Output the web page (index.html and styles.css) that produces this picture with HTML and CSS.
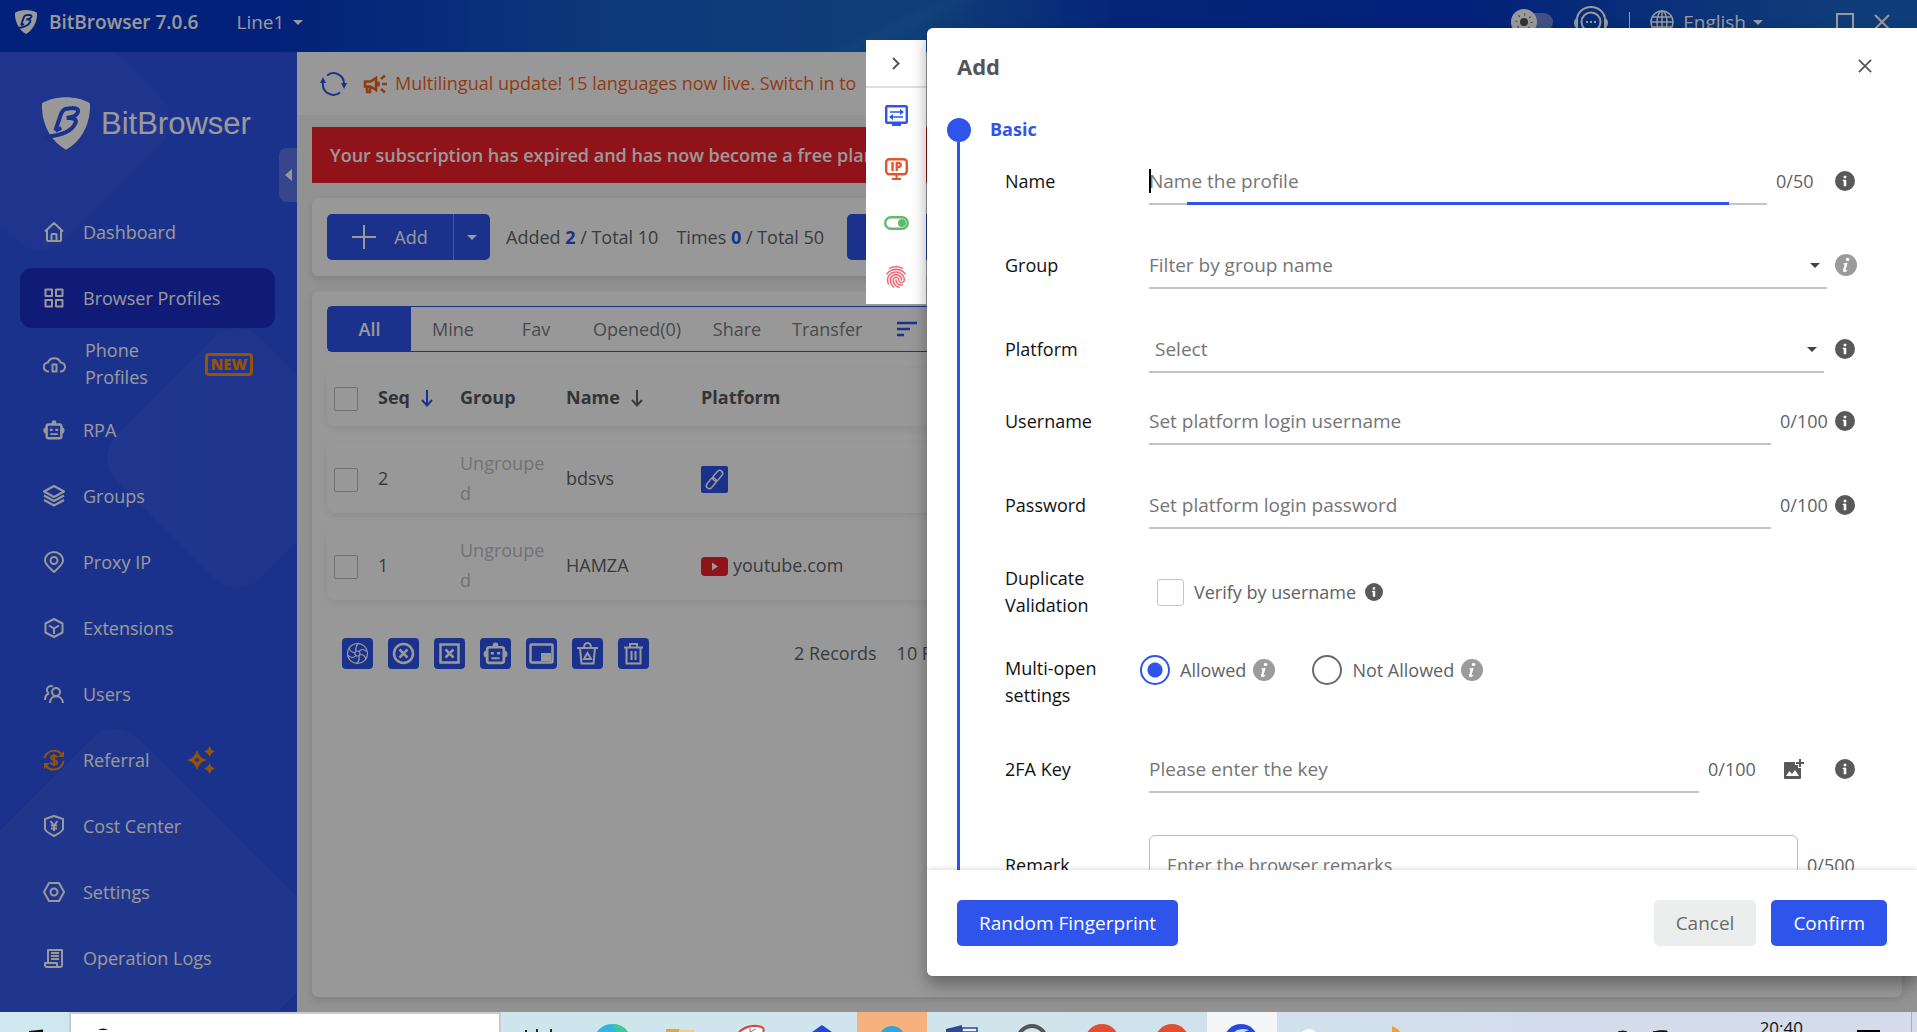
FILE: index.html
```html
<!DOCTYPE html>
<html lang="en">
<head>
<meta charset="utf-8">
<meta name="viewport" content="width=device-width, initial-scale=1">
<title>BitBrowser 7.0.6</title>
<link rel="stylesheet" href="styles.css">
</head>
<body>
<svg class="sprite" aria-hidden="true">
  <symbol id="caret" viewBox="0 0 10 5"><path d="M0 0h10L5 5z" fill="currentColor"/></symbol>
  <symbol id="info" viewBox="0 0 20 20"><circle cx="10" cy="10" r="10" fill="#595959"/><path d="M9 5h2v2H9zM8 9h3v6H9v-5H8z" fill="#fff" stroke="#fff" stroke-width=".6"/></symbol>
  <symbol id="info-soft" viewBox="0 0 22 22"><circle cx="11" cy="11" r="11" fill="#9b9b9b"/><circle cx="12.6" cy="5.4" r="1.7" fill="#fff"/><path d="M8.2 9.6l4.4-.8-2 7.2c-.2.8.6.6 1.6-.3l.4.5c-1.6 1.7-2.6 2-3.6 1.8-.9-.2-1.1-1-.9-1.8l1.5-5.6-1.5-.3z" fill="#fff"/></symbol>
  <symbol id="cross" viewBox="0 0 16 16"><path d="M1 1l14 14M15 1L1 15" stroke="currentColor" stroke-width="2" fill="none"/></symbol>
  <symbol id="robot" viewBox="0 0 24 24"><circle cx="12" cy="4" r="2.6" fill="currentColor"/><rect x="0.5" y="9" width="23" height="7" rx="3.5" fill="currentColor"/><rect x="4" y="6" width="16" height="15" rx="2" fill="var(--robot-bg)" stroke="currentColor" stroke-width="2.6"/><path d="M7.5 10.5h3V13h-3zM13.500 10.500h3V13h-3zM8 15.500h8v2H8z" fill="currentColor"/></symbol>
  <symbol id="shield" viewBox="0 0 144 157"><path d="M0 18C40-6 104-6 144 18C147 78 118 132 72 157C26 132-3 78 0 18z" fill="currentColor"/><path d="M40 100L55 56Q60 36 74 34L92 32Q113 32 107 46Q103 58 74 62Q108 60 100 78Q84 112 14 118M40 100l18-8" fill="none" stroke="var(--shield-bg)" stroke-width="12"/><path d="M10 112Q22 130 38 129L30 140L0 126z" fill="var(--shield-bg)"/></symbol>
</svg>

<div class="app">
  <header class="titlebar">
    <svg class="titlebar-logo" width="22" height="24"><use href="#shield"/></svg>
    <strong class="titlebar-name">BitBrowser 7.0.6</strong>
    <button class="plain line-select" type="button">Line1 <svg width="10" height="5"><use href="#caret"/></svg></button>
    <span class="spacer"></span>
    <span class="theme-switch"><svg width="26" height="26" viewBox="0 0 26 26"><circle cx="13" cy="13" r="13" fill="#fff"/><circle cx="13" cy="13" r="4" fill="#555"/><circle cx="13" cy="13" r="7.500" fill="none" stroke="#666" stroke-width="2" stroke-dasharray="1 4.900"/></svg></span>
    <svg class="headset" width="36" height="32" viewBox="0 0 36 32"><g fill="none" stroke="#fff" stroke-width="2"><path d="M4 22V14a14 13 0 0 1 28 0v8"/><circle cx="18" cy="16" r="9.500"/></g><path d="M3 12q-4 5 0 10zM33 12q4 5 0 10zM13 15h2v2h-2zM17 15h2v2h-2zM21 15h2v2h-2z" fill="#fff"/></svg>
    <span class="titlebar-rule"></span>
    <svg class="globe" width="24" height="24" viewBox="0 0 24 24"><g fill="none" stroke="#fff" stroke-width="1.500"><circle cx="12" cy="12" r="11"/><ellipse cx="12" cy="12" rx="5" ry="11"/><path d="M12 1v22M1 12h22M3 7h18M3 17h18"/></g></svg>
    <button class="plain language" type="button">English <svg width="10" height="5"><use href="#caret"/></svg></button>
    <svg class="win-max" width="18" height="18" viewBox="0 0 18 18"><rect x="1" y="1" width="16" height="16" fill="none" stroke="#fff" stroke-width="2"/></svg>
    <svg class="win-close" width="16" height="16"><use href="#cross"/></svg>
  </header>

  <div class="workspace">
    <aside class="sidebar">
      <svg class="sidebar-art" aria-hidden="true">
        <defs>
          <linearGradient id="fade" x1="0" y1="1" x2="1" y2="0"><stop offset="0" stop-color="#fff" stop-opacity=".05"/><stop offset="1" stop-color="#fff" stop-opacity=".01"/></linearGradient>
        </defs>
        <rect x="-60" y="-32" width="202" height="202" rx="32" fill="#fff" opacity=".03" transform="rotate(45 41 69)"/>
        <rect x="136" y="305" width="202" height="202" rx="32" fill="url(#fade)" transform="rotate(45 237 406)"/>
        <rect x="-47" y="731" width="324" height="324" rx="32" fill="#fff" opacity=".04" transform="rotate(45 115 893)"/>
      </svg>
      <div class="brand"><svg width="48" height="53"><use href="#shield"/></svg><span>BitBrowser</span></div>
      <button class="collapse" type="button" aria-label="Collapse menu"><svg width="7" height="12" viewBox="0 0 7 12"><path d="M7 0v12L0 6z" fill="#fff"/></svg></button>
      <nav class="menu">
        <a href="#"><svg width="20" height="20" viewBox="0 0 20 20"><path d="M1 9.500L10 1l9 8.500M3 8v10q0 1 1 1h12q1 0 1-1V8M7.500 19v-6q0-1 1-1h3q1 0 1 1v6" class="stroke"/></svg>Dashboard</a>
        <a href="#" class="active"><svg width="20" height="20" viewBox="0 0 20 20"><path d="M1.500 1.500h6.500v6.500H1.500zM12 1.500h6.500v6.500H12zM1.500 12h6.500v6.500H1.500zM12 12h6.500v6.500H12z" class="stroke"/></svg>Browser Profiles</a>
        <a href="#"><svg width="23" height="20" viewBox="0 0 23 20"><path d="M6 17.500h-.5a4.500 4.500 0 0 1-.5-9a6.500 6 0 0 1 12.500 0a4.500 4.500 0 0 1 0 9h-.5" class="stroke"/><path d="M9.500 10.500h4v7h-4z" class="stroke"/></svg><span class="two-line">Phone Profiles</span><span class="new-badge">NEW</span></a>
        <a href="#"><svg width="22" height="22"><use href="#robot"/></svg>RPA</a>
        <a href="#"><svg width="22" height="22" viewBox="0 0 22 22"><path d="M11 1l10 5.500L11 12L1 6.500zM1 10.500L11 16l10-5.500M1 15l10 5.500L21 15" class="stroke"/></svg>Groups</a>
        <a href="#"><svg width="20" height="22" viewBox="0 0 20 22"><path d="M10 21C6 17 1 13.500 1 9.500a9 8.500 0 0 1 18 0C19 13.500 14 17 10 21z" class="stroke"/><circle cx="10" cy="9.500" r="3.500" class="stroke"/></svg>Proxy IP</a>
        <a href="#"><svg width="20" height="20" viewBox="0 0 20 20"><path d="M10 1l8.500 4.500v9L10 19l-8.500-4.500v-9zM5 7.500L10 10.500l5-3M10 10.500V16" class="stroke"/></svg>Extensions</a>
        <a href="#"><svg width="20" height="20" viewBox="0 0 20 20"><circle cx="12" cy="8" r="4" class="stroke"/><path d="M6 19c0-9 12-9 13 0M9 2.500a4 4 0 1 0-4 7M1 16c0-4 2-6 4-6.500" class="stroke"/></svg>Users</a>
        <a href="#"><svg class="gold" width="22" height="22" viewBox="0 0 22 22"><path d="M1.500 9A10 10 0 0 1 19 5.500M20.500 12A10 10 0 0 1 3 17" class="stroke"/><path d="M21 2v6h-6zM1 20v-6h6z" fill="currentColor"/><path d="M14 8.500c-.5-2.500-6-2.500-6 0c0 3 6 2 6 5c0 2.500-6 2.500-6 0M11 5v12" class="thin"/></svg>Referral<svg class="gold sparkles" width="28" height="28" viewBox="0 0 28 28"><path fill-rule="evenodd" d="M10 4q2 8 10 10q-8 2-10 10q-2-8-10-10q8-2 10-10zM10 11.500l-2.500 2.500l2.500 2.500l2.500-2.500z" fill="currentColor"/><path d="M22.500 0q1 4 5.500 5.500q-4.500 1.500-5.500 5.500q-1-4-5.500-5.500q4.500-1.500 5.500-5.500zM22.500 17q1 4 5.500 5.500q-4.500 1.500-5.500 5.500q-1-4-5.500-5.500q4.500-1.500 5.500-5.500z" fill="currentColor"/></svg></a>
        <a href="#"><svg width="20" height="22" viewBox="0 0 20 22"><path d="M10 1l9 3v10q-1 3-9 7q-8-4-9-7V4z" class="stroke"/><path d="M6.500 6L10 10.500L13.500 6M10 10v6M7 10.500h6M7 13.500h6" class="stroke"/></svg>Cost Center</a>
        <a href="#"><svg width="22" height="20" viewBox="0 0 22 20"><path d="M6 1h10l5 9l-5 9H6L1 10z" class="stroke"/><circle cx="11" cy="10" r="3.500" class="stroke"/></svg>Settings</a>
        <a href="#"><svg width="20" height="20" viewBox="0 0 20 20"><path d="M4 14V2h14v15q0 2-2 2H3q-2 0-2-2v-2h12v2q0 2 2 2M7 5h8M7 8h8M7 11h8" class="stroke"/></svg>Operation Logs</a>
      </nav>
    </aside>

    <main class="main">
      <div class="notice">
        <svg width="27" height="26" viewBox="0 0 27 26"><path d="M7 4.500A10.500 10.500 0 0 1 24 13M20 21.500A10.500 10.500 0 0 1 3 12" fill="none" stroke="#2e54eb" stroke-width="2"/><path d="M21 12h6l-3 6zM0 12h6L3 6z" fill="#2e54eb"/></svg>
        <svg width="24" height="20" viewBox="0 0 24 20"><path d="M2 7.500h5.500L13 4v12l-5.500-3.500H2zM4 13v5h3v-5M15.500 7.500v5" fill="none" stroke="#f2651c" stroke-width="2.500"/><path d="M18 5l4-3.500M19 10h5M18 15l4 3.500" stroke="#f2651c" stroke-width="2.500"/></svg>
        <span>Multilingual update! 15 languages now live. Switch in to</span>
      </div>
      <div class="alert">Your subscription has expired and has now become a free plan</div>

      <section class="card toolbar">
        <div class="split">
          <button type="button" class="split-main"><svg width="24" height="24" viewBox="0 0 24 24"><path d="M12 0v24M0 12h24" stroke="#fff" stroke-width="2"/></svg>Add</button><button type="button" class="split-more" aria-label="More add options"><svg width="10" height="5"><use href="#caret"/></svg></button>
        </div>
        <span class="stat">Added <b>2</b> / Total 10</span>
        <span class="stat last">Times <b>0</b> / Total 50</span>
        <button type="button" class="primary buy" aria-label="Purchase"></button>
      </section>

      <section class="card profiles">
        <div class="tabs">
          <button type="button" class="tab current">All</button>
          <button type="button" class="tab">Mine</button>
          <button type="button" class="tab">Fav</button>
          <button type="button" class="tab">Opened(0)</button>
          <button type="button" class="tab">Share</button>
          <button type="button" class="tab">Transfer</button>
          <svg class="sort" width="20" height="16" viewBox="0 0 20 16"><path d="M0 2h20M0 8h13M0 14h7" stroke="#2e54eb" stroke-width="2.500"/></svg>
        </div>
        <table class="grid">
          <colgroup><col class="c-check"><col class="c-seq"><col class="c-group"><col class="c-name"><col></colgroup>
          <thead><tr>
            <th><input type="checkbox" class="tick" aria-label="Select all"></th>
            <th>Seq <svg width="12" height="17" viewBox="0 0 12 17"><path d="M6 0v15M1 10l5 5.500l5-5.500" fill="none" stroke="#2e54eb" stroke-width="2"/></svg></th>
            <th>Group</th>
            <th>Name <svg width="12" height="17" viewBox="0 0 12 17"><path d="M6 0v15M1 10l5 5.500l5-5.500" fill="none" stroke="#606266" stroke-width="2"/></svg></th>
            <th>Platform</th>
          </tr></thead>
          <tbody>
            <tr><td><input type="checkbox" class="tick" aria-label="Select profile 2"></td><td>2</td><td class="muted">Ungrouped</td><td>bdsvs</td><td><svg class="platform" width="27" height="27" viewBox="0 0 27 27"><rect width="27" height="27" rx="2" fill="#2e54eb"/><g fill="none" stroke="#fff" stroke-width="1.500" transform="rotate(-50 13.500 13.500)"><rect x="2.500" y="10.500" width="12" height="6" rx="3"/><rect x="12.500" y="10.500" width="12" height="6" rx="3"/></g></svg></td></tr>
            <tr><td><input type="checkbox" class="tick" aria-label="Select profile 1"></td><td>1</td><td class="muted">Ungrouped</td><td>HAMZA</td><td><svg class="platform" width="27" height="19" viewBox="0 0 27 19"><rect width="27" height="19" rx="4" fill="#f0212b"/><path d="M11 5.500v8l6-4z" fill="#fff"/></svg>youtube.com</td></tr>
          </tbody>
        </table>
        <div class="grid-foot">
          <button type="button" class="tool" aria-label="Open"><svg width="23" height="23" viewBox="0 0 23 23"><g fill="none" stroke="#fff" stroke-width="1.200"><circle cx="11.500" cy="11.500" r="10"/><circle cx="11.500" cy="11.500" r="2.500"/><path d="M10 9q-1-5 3-8M13 9.500q3-4 8 0M14 12.500q5 0 6 5M13 14q1 5-3 8M10 13.500q-3 4-8 0M9 10.500q-5 0-6-5"/></g></svg></button>
          <button type="button" class="tool" aria-label="Close"><svg width="23" height="23" viewBox="0 0 23 23"><circle cx="11.500" cy="11.500" r="9.500" fill="none" stroke="#fff" stroke-width="2.500"/><path d="M7.500 7.500l8 8M15.500 7.500l-8 8" stroke="#fff" stroke-width="2.500"/></svg></button>
          <button type="button" class="tool" aria-label="Close window"><svg width="23" height="23" viewBox="0 0 23 23"><rect x="2.500" y="2.500" width="18" height="18" fill="none" stroke="#fff" stroke-width="2.500"/><path d="M7.500 7.500l8 8M15.500 7.500l-8 8" stroke="#fff" stroke-width="2.500"/></svg></button>
          <button type="button" class="tool" aria-label="RPA"><svg width="25" height="25"><use href="#robot"/></svg></button>
          <button type="button" class="tool" aria-label="Arrange"><svg width="25" height="21" viewBox="0 0 25 21"><rect x="1.500" y="1.500" width="22" height="18" rx="1" fill="none" stroke="#fff" stroke-width="2.500"/><path d="M12 10h10v8H12z" fill="#fff"/></svg></button>
          <button type="button" class="tool" aria-label="Clear cache"><svg width="23" height="23" viewBox="0 0 23 23"><path d="M1 6h21M4 6l1.500 15.500h12L19 6M8 6q0-5 3.500-5t3.500 5M8 17l3.500-6l3.500 6z" fill="none" stroke="#fff" stroke-width="2"/></svg></button>
          <button type="button" class="tool" aria-label="Delete"><svg width="23" height="23" viewBox="0 0 23 23"><path d="M2 5.500h19M4.500 5.500v16h14v-16M8 5V2h7v3M9.500 9v9M13.500 9v9" fill="none" stroke="#fff" stroke-width="2"/></svg></button>
          <span class="records">2 Records</span><span>10 Records/page</span>
        </div>
      </section>
    </main>
  </div>

  <div class="overlay">
    <div class="rail">
      <button type="button" class="rail-top" aria-label="Collapse"><svg width="8" height="13" viewBox="0 0 8 13"><path d="M1 1l5.500 5.500L1 12" fill="none" stroke="#555" stroke-width="2"/></svg></button>
      <button type="button" aria-label="Preferences"><svg width="23" height="21" viewBox="0 0 23 21"><rect x="1.200" y="1.200" width="20.600" height="16.600" rx="1" fill="none" stroke="#2e54eb" stroke-width="2.400"/><path d="M7 18h9v3H7z" fill="#2e54eb"/><path d="M5 7h12M18 12H6" stroke="#2e54eb" stroke-width="1.500"/><path d="M15 4l4 3l-4 3zM8 9l-4 3l4 3z" fill="#2e54eb"/></svg></button>
      <button type="button" aria-label="Proxy"><svg width="23" height="22" viewBox="0 0 23 22"><rect x="1.200" y="1.200" width="20.600" height="15" rx="3" fill="none" stroke="#e2552b" stroke-width="2.400"/><text x="11.500" y="13" class="ip-mark" text-anchor="middle">IP</text><path d="M11.500 17v4M7 21h9" stroke="#e2552b" stroke-width="2"/></svg></button>
      <button type="button" aria-label="Switches"><svg width="25" height="14" viewBox="0 0 25 14"><rect x="1.200" y="1.200" width="22.600" height="11.600" rx="5.800" fill="none" stroke="#63b96c" stroke-width="2.400"/><circle cx="18" cy="7" r="4" fill="#63b96c"/></svg></button>
      <button type="button" aria-label="Fingerprint"><svg width="26" height="26" viewBox="0 0 24 24"><path fill="#ee5561" stroke="#ee5561" stroke-width=".3" d="M17.810 4.470c-.08 0-.16-.02-.23-.06C15.660 3.420 14 3 12.010 3c-1.980 0-3.860.47-5.570 1.410-.24.13-.54.04-.68-.2-.13-.24-.04-.55.2-.68C7.820 2.520 9.860 2 12.010 2c2.130 0 3.990.47 6.030 1.520.25.13.34.43.21.67-.09.18-.26.28-.44.28zM3.500 9.720c-.1 0-.2-.03-.29-.09-.23-.16-.28-.47-.12-.7.99-1.400 2.250-2.500 3.750-3.270C9.980 4.040 14 4.030 17.150 5.650c1.500.77 2.760 1.860 3.750 3.250.16.22.11.54-.12.7-.23.16-.54.11-.7-.12-.9-1.260-2.040-2.250-3.390-2.940-2.870-1.470-6.540-1.470-9.400.01-1.360.7-2.500 1.700-3.400 2.960-.08.14-.23.21-.39.21zm6.250 12.070c-.13 0-.26-.05-.35-.15-.87-.87-1.340-1.430-2.010-2.640-.69-1.230-1.050-2.730-1.050-4.340 0-2.970 2.540-5.390 5.660-5.390s5.660 2.420 5.660 5.390c0 .28-.22.5-.5.5s-.5-.22-.5-.5c0-2.420-2.090-4.390-4.660-4.390-2.570 0-4.660 1.970-4.660 4.390 0 1.440.32 2.770.93 3.850.64 1.150 1.080 1.640 1.850 2.420.19.2.19.51 0 .71-.11.1-.24.15-.37.15zm7.170-1.850c-1.190 0-2.240-.3-3.100-.89-1.490-1.010-2.380-2.650-2.380-4.390 0-.28.22-.5.5-.5s.5.22.5.5c0 1.410.72 2.740 1.940 3.560.71.48 1.540.71 2.540.71.24 0 .64-.03 1.040-.1.27-.05.53.13.58.41.05.27-.13.53-.41.58-.57.11-1.070.12-1.210.12zM14.910 22c-.04 0-.09-.01-.13-.02-1.590-.44-2.630-1.030-3.720-2.100-1.400-1.390-2.170-3.240-2.170-5.220 0-1.620 1.380-2.940 3.080-2.940 1.700 0 3.080 1.320 3.080 2.940 0 1.070.93 1.940 2.080 1.940s2.080-.87 2.080-1.940c0-3.770-3.250-6.830-7.250-6.830-2.840 0-5.440 1.580-6.610 4.030-.39.81-.59 1.760-.59 2.800 0 .78.07 2.010.67 3.610.1.26-.03.55-.29.64-.26.1-.55-.04-.64-.29-.49-1.310-.73-2.610-.73-3.960 0-1.200.23-2.290.68-3.240 1.330-2.790 4.280-4.600 7.510-4.600 4.550 0 8.250 3.510 8.250 7.830 0 1.620-1.380 2.940-3.080 2.940s-3.080-1.320-3.080-2.940c0-1.070-.93-1.940-2.080-1.940s-2.080.87-2.080 1.940c0 1.710.66 3.310 1.870 4.510.95.94 1.860 1.460 3.270 1.850.27.07.42.35.35.61-.05.23-.26.38-.47.38z"/></svg></button>
    </div>

    <section class="dialog" role="dialog" aria-labelledby="dialog-title">
      <header class="dialog-head">
        <h1 id="dialog-title">Add</h1>
        <button type="button" class="plain" aria-label="Close dialog"><svg width="14" height="14"><use href="#cross"/></svg></button>
      </header>
      <div class="dialog-body">
        <div class="timeline"><span class="dot"></span><span class="line"></span></div>
        <form class="form" id="add-form">
          <h2>Basic</h2>
          <div class="row">
            <label for="f-name">Name</label>
            <div class="control"><span class="field focused"><input id="f-name" type="text" placeholder="Name the profile"></span><span class="count wide">0/50</span><svg width="20" height="20"><use href="#info"/></svg></div>
          </div>
          <div class="row">
            <label for="f-group">Group</label>
            <div class="control overhang"><span class="field drop"><select id="f-group"><option>Filter by group name</option></select><svg width="10" height="5"><use href="#caret"/></svg></span><svg class="after-drop" width="22" height="22"><use href="#info-soft"/></svg></div>
          </div>
          <div class="row tight">
            <label for="f-platform">Platform</label>
            <div class="control"><span class="field drop inset"><select id="f-platform"><option>Select</option></select><svg width="10" height="5"><use href="#caret"/></svg></span><svg class="after-drop far" width="20" height="20"><use href="#info"/></svg></div>
          </div>
          <div class="row">
            <label for="f-user">Username</label>
            <div class="control"><span class="field"><input id="f-user" type="text" placeholder="Set platform login username"></span><span class="count">0/100</span><svg width="20" height="20"><use href="#info"/></svg></div>
          </div>
          <div class="row">
            <label for="f-pass">Password</label>
            <div class="control"><span class="field"><input id="f-pass" type="text" placeholder="Set platform login password"></span><span class="count">0/100</span><svg width="20" height="20"><use href="#info"/></svg></div>
          </div>
          <div class="row">
            <span class="label">Duplicate Validation</span>
            <div class="control options"><label class="choice check"><input type="checkbox">Verify by username</label><svg width="18" height="18"><use href="#info"/></svg></div>
          </div>
          <div class="row top">
            <span class="label">Multi-open settings</span>
            <div class="control radios">
              <label class="choice radio"><input type="radio" name="multi" checked>Allowed</label><svg width="22" height="22"><use href="#info-soft"/></svg>
              <label class="choice radio second"><input type="radio" name="multi">Not Allowed</label><svg width="22" height="22"><use href="#info-soft"/></svg>
            </div>
          </div>
          <div class="row">
            <label for="f-key">2FA Key</label>
            <div class="control"><span class="field"><input id="f-key" type="text" placeholder="Please enter the key"></span><span class="count">0/100</span><button type="button" class="plain image-add" aria-label="Add from image"><svg width="20" height="20" viewBox="0 0 20 20"><path d="M0 4q0-1 1-1h10v3h3v3h3v10q0 1-1 1H1q-1 0-1-1z" fill="#595959"/><path d="M2 17l3.500-5l2.500 3l3-4l4 6z" fill="#fff"/><path d="M16 0v8M12 4h8" stroke="#595959" stroke-width="2"/></svg></button><svg width="20" height="20"><use href="#info"/></svg></div>
          </div>
          <div class="row remark">
            <label for="f-remark">Remark</label>
            <div class="control overhang"><textarea id="f-remark" placeholder="Enter the browser remarks"></textarea><span class="count">0/500</span></div>
          </div>
        </form>
      </div>
      <footer class="dialog-foot">
        <button type="button" class="primary">Random Fingerprint</button>
        <span class="spacer"></span>
        <button type="button" class="secondary">Cancel</button>
        <button type="submit" form="add-form" class="primary confirm">Confirm</button>
      </footer>
    </section>
  </div>
</div>

<footer class="taskbar">
  <div class="start"><svg width="16" height="20" viewBox="0 0 16 20"><path d="M0 19l14-1.500v2.500H0z" fill="#111"/></svg></div>
  <div class="search"><svg width="20" height="16" viewBox="0 0 20 16"><circle cx="10" cy="23" r="7.500" fill="none" stroke="#111" stroke-width="2"/></svg></div>
  <div class="task-view"><svg width="28" height="20" viewBox="0 0 28 20"><path d="M1 18v2M12 17v3M26 17v3" stroke="#222" stroke-width="2"/></svg></div>
  <ul class="apps">
    <li><svg viewBox="0 0 70 20"><circle cx="35" cy="30" r="18" fill="#35b4e0"/><path d="M36 12a18 18 0 0 1 15 8H40z" fill="#3fc79a"/></svg></li>
    <li><svg viewBox="0 0 70 20"><path d="M19 17h13l3 3H19z" fill="#e8a33d"/><path d="M32 18h16v2H32z" fill="#f3cf8a"/></svg></li>
    <li><svg viewBox="0 0 70 20"><path d="M22 20q8-7 18-6q9 1 6 6" fill="#fff" stroke="#e04040" stroke-width="2"/><path d="M33 16v4l6-3" fill="none" stroke="#777"/></svg></li>
    <li><svg viewBox="0 0 70 20"><path d="M35 13l10 7H25z" fill="#2746d6"/></svg></li>
    <li class="hot"><svg viewBox="0 0 70 20"><circle cx="35" cy="27" r="13" fill="#2fa6dd"/></svg></li>
    <li><svg viewBox="0 0 70 20"><path d="M19 17l16-4v7H19z" fill="#2d4a94"/><path d="M35 16h15v4H35z" fill="#eef3fb" stroke="#2d4a94" stroke-width="1.500"/></svg></li>
    <li><svg viewBox="0 0 70 20"><circle cx="35" cy="28" r="14" fill="none" stroke="#555" stroke-width="4"/></svg></li>
    <li><svg viewBox="0 0 70 20"><circle cx="35" cy="29" r="17" fill="#e04f30"/></svg></li>
    <li><svg viewBox="0 0 70 20"><circle cx="35" cy="29" r="17" fill="#e04f30"/></svg></li>
    <li class="front"><svg viewBox="0 0 70 20"><circle cx="34" cy="29" r="17" fill="#2549dc"/><path d="M27 20q6-5 15-2l-5 2z" fill="#cfd9fb"/></svg></li>
    <li><svg viewBox="0 0 70 20"><circle cx="32" cy="26" r="9" fill="#fff"/></svg></li>
    <li><svg viewBox="0 0 70 20"><path d="M45 14q7 3 8 6h-8z" fill="#e8a33d"/></svg></li>
  </ul>
  <span class="spacer"></span>
  <svg class="tray" width="52" height="20" viewBox="0 0 52 20"><path d="M1 20q5-2 9 0M36 20q6-2 14-1v1z" fill="#111" stroke="#111"/></svg>
  <time>20:40</time>
  <svg class="action" width="23" height="20" viewBox="0 0 23 20"><path d="M0 18h23v2H0z" fill="#000"/></svg>
  <span class="peek"></span>
</footer>
</body>
</html>
```
FILE: styles.css
```css
:root {
  --blue: #2e54eb;
  --navy: #192dc6;
  --gold: #f98b0c;
  --text: #606266;
  --shield-bg: var(--blue);
  --robot-bg: var(--blue);
}

* { box-sizing: border-box; }

body {
  margin: 0;
  height: 100vh;
  display: flex;
  flex-direction: column;
  overflow: hidden;
  font: 18px/27px "Open Sans", "Noto Sans", sans-serif;
  color: var(--text);
  background: #fff;
}

button, input, select, textarea { font: inherit; color: inherit; }
button { border: 0; padding: 0; cursor: pointer; }
svg { flex: none; display: block; }
.sprite { position: absolute; width: 0; height: 0; }
.spacer { flex: 1; }
.plain { background: none; display: flex; align-items: center; }

.app {
  flex: 1;
  min-height: 0;
  position: relative;
  display: flex;
  flex-direction: column;
  overflow: hidden;
}

/* Title bar */
.titlebar {
  flex: none;
  height: 52px;
  padding: 0 27px 8px 15px;
  display: flex;
  align-items: center;
  font-size: 19px;
  color: #fff;
  --shield-bg: #0537cb;
  background:
    linear-gradient(155deg, transparent 46%, rgba(40, 130, 200, .25) 47%, transparent 49%),
    linear-gradient(90deg, #0537cb 0, #0537cb 14%, #1560cd 32%, #1c6ac8 48%, #0a3fcb 58%, #0537cb 76%, #1a66ca 96%);
}
.titlebar-name { margin-left: 12px; font-weight: 600; }
.line-select { margin-left: 38px; gap: 9px; font-weight: 500; }
.theme-switch { width: 42px; height: 18px; border-radius: 9px; background: #6f86dc; display: flex; align-items: center; }
.headset { margin-left: 20px; }
.titlebar-rule { width: 1px; height: 20px; margin: 0 20px; background: #fff; }
.language { margin: 0 73px 0 9px; gap: 7px; font-weight: 500; }
.win-max { margin-right: 20px; }

/* Sidebar */
.workspace { flex: 1; min-height: 0; display: flex; }
.sidebar {
  flex: none;
  width: 297px;
  padding: 45px 22px 0 20px;
  position: relative;
  overflow: hidden;
  color: #fff;
  background: var(--blue);
}
.sidebar-art { position: absolute; inset: 0; width: 100%; height: 100%; }
.brand {
  position: relative;
  display: flex;
  align-items: center;
  gap: 11px;
  height: 53px;
  padding-left: 22px;
  margin-bottom: 52px;
  font: 31px/53px "Liberation Sans", Arial, sans-serif;
}
.collapse {
  position: absolute;
  right: 0;
  top: 96px;
  width: 18px;
  height: 54px;
  display: grid;
  place-items: center;
  border-radius: 8px 0 0 8px;
  background: #5a76ea;
}
.menu { position: relative; display: grid; gap: 6px; }
.menu a {
  height: 60px;
  padding: 0 22px;
  display: grid;
  grid-template-columns: 24px auto 1fr;
  align-items: center;
  column-gap: 17px;
  border-radius: 12px;
  color: #fff;
  text-decoration: none;
  font-weight: 500;
}
.menu svg { justify-self: center; }
.menu .active { background: var(--navy); }
.menu .stroke { fill: none; stroke: currentColor; stroke-width: 2; stroke-linejoin: round; }
.menu .thin { fill: none; stroke: currentColor; stroke-width: 2; }
.menu .gold { color: var(--gold); }
.menu .sparkles { justify-self: start; margin-left: 20px; }
.two-line { width: 68px; padding-left: 2px; }
.new-badge {
  justify-self: end;
  width: 48px;
  border: 3px solid var(--gold);
  border-radius: 4px;
  color: var(--gold);
  text-align: center;
  font-size: 15px;
  line-height: 17px;
  font-weight: 800;
}

/* Main column */
.main {
  flex: 1;
  min-width: 0;
  display: flex;
  flex-direction: column;
  padding: 0 15px 15px;
  background: #f3f3f3;
}
.notice {
  height: 63px;
  margin: 0 -15px 12px;
  padding: 0 23px;
  display: flex;
  align-items: center;
  background: #fdfdfd;
  color: #f2651c;
  white-space: nowrap;
}
.notice svg + svg { margin: 0 8px 0 16px; }
.alert {
  height: 56px;
  padding: 0 18px;
  line-height: 56px;
  background: #f0212b;
  color: #fff;
  font-weight: 600;
}
.card {
  margin-top: 15px;
  padding: 15px;
  border-radius: 6px;
  background: #fefefe;
  box-shadow: 0 3px 8px rgba(0, 0, 0, .12);
}
.toolbar { height: 78px; display: flex; align-items: center; }
.split { display: flex; height: 46px; margin-right: 16px; border-radius: 5px; overflow: hidden; color: #fff; }
.split-main { width: 126px; display: flex; align-items: center; justify-content: center; gap: 18px; background: var(--blue); font-weight: 500; }
.split-more { width: 37px; display: grid; place-items: center; background: var(--blue); border-left: 1px solid #8398f3; }
.stat { margin-right: 18px; }
.stat.last { margin-right: 23px; }
.stat b { color: var(--blue); }
.primary, .secondary {
  height: 46px;
  padding: 0 22px;
  border-radius: 5px;
  background: var(--blue);
  color: #fff;
  font-size: 19px;
  font-weight: 500;
}
.secondary { background: #eceeed; color: #6b6b6b; font-weight: 400; }
.buy { width: 130px; }

.profiles { flex: 1; }
.tabs {
  display: flex;
  align-items: stretch;
  height: 46px;
  border: 1px solid var(--blue);
  border-radius: 5px;
}
.tab { background: none; padding: 0 15px; color: #7a7c80; }
.tab:nth-child(2) { width: 84px; }
.tab:nth-child(3) { width: 82px; }
.tab:nth-child(4) { width: 120px; }
.tab:nth-child(5) { width: 80px; }
.tab:nth-child(6) { width: 94px; }
.tab.current { width: 83px; background: var(--blue); color: #fff; font-weight: 600; }
.sort { align-self: center; margin-left: 26px; }

.grid {
  width: 100%;
  table-layout: fixed;
  border-collapse: separate;
  border-spacing: 0 16px;
}
.c-check { width: 51px; }
.c-seq { width: 82px; }
.c-group { width: 106px; }
.c-name { width: 135px; }
.grid tr { box-shadow: 0 3px 9px rgba(0, 0, 0, .07); border-radius: 8px; }
.grid th { height: 58px; padding: 0; text-align: left; font-weight: 700; color: #55575b; }
.grid td { height: 71px; padding: 0; line-height: 30px; }
.grid th svg, .grid td svg { display: inline-block; vertical-align: middle; }
.grid th svg { margin-left: 6px; }
.grid .platform { margin-right: 5px; }
.grid .muted { padding-right: 16px; color: #bdbfc3; word-break: break-all; }
.tick {
  appearance: none;
  display: block;
  width: 24px;
  height: 24px;
  margin: 4px 0 0 7px;
  border: 1px solid #bcbcbc;
  border-radius: 2px;
  background: #fff;
}
.grid-foot { display: flex; align-items: center; gap: 15px; padding: 22px 0 0 15px; white-space: nowrap; }
.tool { flex: none; width: 31px; height: 31px; display: grid; place-items: center; border-radius: 4px; background: var(--blue); color: #fff; }
.records { margin: 0 5px 0 130px; }

/* Overlay */
.overlay {
  position: absolute;
  inset: 0;
  z-index: 2;
  display: flex;
  justify-content: flex-end;
  align-items: flex-start;
  gap: 1px;
  padding: 28px 0 36px;
  background: rgba(0, 0, 0, .4);
}
.rail { flex: none; width: 60px; margin-top: 12px; background: #fff; display: grid; }
.rail button { height: 54px; display: grid; place-items: center; background: none; }
.rail .rail-top { height: 48px; border-bottom: 2px solid #e0e0e0; }
.ip-mark { font: 800 12px "Open Sans", sans-serif; fill: #e2552b; }

.dialog {
  width: 60%;
  max-width: 990px;
  height: 100%;
  display: flex;
  flex-direction: column;
  overflow: hidden;
  border-radius: 6px 0 0 6px;
  background: #fff;
  box-shadow: 0 8px 16px rgba(0, 0, 0, .35);
}
.dialog-head {
  flex: none;
  height: 76px;
  padding: 0 45px 0 30px;
  display: flex;
  align-items: center;
  justify-content: space-between;
  color: #555;
}
.dialog-head h1 { margin: 0; font-size: 22px; line-height: 30px; font-weight: 700; }
.dialog-body { flex: 1; min-height: 0; display: flex; overflow: hidden; padding: 12px 62px 0 20px; }
.timeline { flex: none; width: 24px; display: flex; flex-direction: column; padding-top: 2px; }
.dot { flex: none; width: 24px; height: 24px; border-radius: 50%; background: var(--blue); }
.line { flex: 1; width: 3px; margin-left: 10px; background: var(--blue); }

.form { flex: 1; min-width: 0; padding-left: 34px; }
.form h2 { margin: 0 0 14px -15px; font-size: 18px; line-height: 27px; font-weight: 700; color: var(--blue); }
.row {
  display: grid;
  grid-template-columns: 144px 1fr;
  align-items: center;
  margin-bottom: 36px;
}
.row.tight { margin-bottom: 24px; }
.row > label, .label { color: #111; }
.label { width: 100px; }
.control { display: flex; align-items: center; }
.control.overhang { margin-right: -2px; }
.field { flex: 1; min-width: 0; position: relative; display: flex; align-items: center; }
.field input, .field select {
  appearance: none;
  width: 100%;
  height: 48px;
  padding: 2px 0 0;
  border: 0;
  border-bottom: 2px solid #c4c4c4;
  border-radius: 0;
  outline: 0;
  background: none;
  font-size: 19px;
  color: #757575;
}
.field.inset select { padding-left: 6px; }
.field svg { position: absolute; right: 7px; color: #444; }
::placeholder { color: #757575; opacity: 1; }
.focused::before { content: ""; position: absolute; left: 0; top: 12px; width: 2px; height: 24px; background: #000; }
.focused::after { content: ""; position: absolute; left: 38px; right: 38px; bottom: 0; height: 3px; background: var(--blue); }
.count { flex: none; width: 64px; padding-left: 9px; white-space: nowrap; }
.count.wide { width: 68px; }
.after-drop { margin-left: 8px; }
.after-drop.far { margin-left: 11px; }
.options { padding-left: 8px; gap: 9px; }
.choice { display: flex; align-items: center; gap: 10px; }
.choice input { appearance: none; flex: none; margin: 0; background: #fff; }
.check input { width: 27px; height: 27px; border: 1px solid #c4c4c4; border-radius: 3px; }
.radio input { width: 30px; height: 30px; border: 2px solid #6b6b6b; border-radius: 50%; }
.radio input:checked { border-color: var(--blue); background: radial-gradient(circle, var(--blue) 7px, #fff 8px); }
.row.top { align-items: start; }
.radios { height: 30px; margin-left: -9px; gap: 7px; }
.second { margin-left: 30px; }
.image-add { margin: 0 31px 0 21px; }
.remark { align-items: start; }
.remark label { line-height: 72px; }
.remark .control { align-items: flex-start; }
.remark textarea {
  flex: 1;
  height: 120px;
  margin-top: 6px;
  padding: 16px 17px;
  resize: none;
  border: 1px solid #bdbdbd;
  border-radius: 6px;
  line-height: 27px;
}
.remark .count { width: 59px; line-height: 72px; }

.dialog-foot {
  flex: none;
  position: relative;
  display: flex;
  align-items: center;
  gap: 15px;
  padding: 30px;
  background: #fff;
  box-shadow: 0 -1px 5px rgba(0, 0, 0, .15);
}

/* Desktop taskbar */
.taskbar {
  flex: none;
  height: 20px;
  display: flex;
  overflow: hidden;
  color: #111;
  background: linear-gradient(90deg, #cfe7ee, #d0e4ec 55%, #d3dcec 80%, #d5dbea);
}
.start { width: 69px; padding-left: 29px; }
.search { width: 432px; padding-left: 22px; border: 2px solid #c9cbcd; border-bottom: 0; background: #fff; }
.task-view { width: 76px; padding-left: 24px; }
.apps { display: flex; margin: 0; padding: 0; list-style: none; }
.apps li { width: 70px; height: 20px; }
.apps svg { width: 100%; height: 100%; }
.apps .hot { background: #f6b27e; }
.apps .front { background: #f3f5f6; }
.tray { margin-right: 91px; }
.taskbar time { margin-right: 54px; line-height: 32px; font-size: 17px; }
.peek { width: 6px; margin-left: 31px; border-left: 1px solid #a9aeb8; }
```
